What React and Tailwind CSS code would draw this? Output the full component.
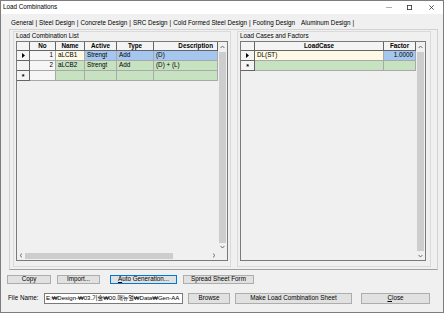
import React from "react";

// grid cell styles
const hd = "h-full flex items-center justify-center border-r border-b border-[#646464] bg-[#f4f4f4] font-bold";
const rh = "h-full flex items-center justify-center border-r border-b border-[#646464] bg-[#f4f4f4]";
const td = "h-full flex items-center border-r border-b border-[#a9a9a9] px-[2px] whitespace-nowrap overflow-hidden";

const blue = "bg-[#a5c7ef]";
const green = "bg-[#c6e2c1]";
const cream = "bg-[#fefae6]";
const plain = "bg-[#f6f6f6]";

function Arrow({ dir }) {
  const d = {
    up: "M0.6 3 L2.5 1 L4.4 3",
    down: "M0.6 1 L2.5 3 L4.4 1",
    left: "M3 0.6 L1 2.5 L3 4.4",
    right: "M1 0.6 L3 2.5 L1 4.4",
  }[dir];
  const vertical = dir === "up" || dir === "down";
  return (
    <svg width={vertical ? 5 : 4} height={vertical ? 4 : 5} viewBox={vertical ? "0 0 5 4" : "0 0 4 5"}>
      <path d={d} fill="none" stroke="#606060" strokeWidth="0.9" />
    </svg>
  );
}

function Pointer() {
  return (
    <svg width="3" height="5" viewBox="0 0 3 5">
      <polygon points="0,0 3,2.5 0,5" fill="#000" />
    </svg>
  );
}

function Star() {
  return <span className="font-bold text-[7px] leading-none translate-y-[1px]">*</span>;
}

function Btn({ className, children }) {
  return (
    <div className={`h-full flex items-center justify-center border bg-[#e1e1e1] whitespace-nowrap ${className}`}>
      {children}
    </div>
  );
}

const combos = [
  { no: "1", name: "aLCB1", active: "Strengt", type: "Add", desc: "(D)", current: true },
  { no: "2", name: "aLCB2", active: "Strengt", type: "Add", desc: "(D) + (L)" },
];

const tabs = ["General", "Steel Design", "Concrete Design", "SRC Design", "Cold Formed Steel Design", "Footing Design"];

export default function App() {
  return (
    <div className="w-[444px] h-[313px] bg-[#f0f0f0] border border-[#7d7d7d] flex flex-col overflow-hidden text-black text-[6.3px] leading-none font-['Liberation_Sans','Noto_Sans_CJK_KR',sans-serif]">
      {/* title bar */}
      <div className="h-[13px] shrink-0 bg-white flex items-center pl-[2px]">
        <span>Load Combinations</span>
        <div className="ml-auto h-full flex items-center mr-[2px]">
          <div className="w-[20px] h-full flex items-center justify-center">
            <svg width="6" height="1" viewBox="0 0 6 1">
              <rect width="6" height="0.8" fill="#9a9a9a" />
            </svg>
          </div>
          <div className="w-[20px] h-full flex items-center justify-center">
            <svg width="5" height="5" viewBox="0 0 5 5">
              <rect x="0.4" y="0.4" width="4.2" height="4.2" fill="none" stroke="#333" strokeWidth="0.8" />
            </svg>
          </div>
          <div className="w-[20px] h-full flex items-center justify-center ml-[2px]">
            <svg width="5" height="5" viewBox="0 0 5 5">
              <path d="M0.3 0.3 L4.7 4.7 M4.7 0.3 L0.3 4.7" stroke="#333" strokeWidth="0.8" />
            </svg>
          </div>
        </div>
      </div>

      {/* tab strip */}
      <div className="h-[15px] shrink-0 flex items-end pb-[3px] pl-[10px] whitespace-nowrap">
        {tabs.map((t, i) => (
          <React.Fragment key={t}>
            <span>{t}</span>
            {i < tabs.length - 1 && <span className="px-[2px]">|</span>}
          </React.Fragment>
        ))}
        <span className="ml-[6px]">Aluminum Design</span>
        <span className="px-[2px]">|</span>
      </div>

      {/* tab page */}
      <div className="ml-[8px] w-[429px] h-[241px] shrink-0 border border-[#d2d2d2] border-b-[#a0a0a0] flex pt-[1px] pl-[3px] gap-[6px]">
        {/* Load Combination List */}
        <div className="w-[218px] h-[236px] border border-[#dadada] flex flex-col pl-[2px]">
          <div className="h-[9px] flex items-center">Load Combination List</div>
          <div className="w-[212px] h-[220px] border border-[#7a7a7a] flex bg-[#f0f0f0]">
            <div className="w-[201px] flex flex-col">
              <div className="flex-1">
                <div className="flex h-[9px]">
                  <div className={`${rh} w-[13px]`} />
                  <div className={`${hd} w-[26px]`}>No</div>
                  <div className={`${hd} w-[29px]`}>Name</div>
                  <div className={`${hd} w-[32px]`}>Active</div>
                  <div className={`${hd} w-[37px]`}>Type</div>
                  <div className={`${hd} w-[64px] !justify-end pr-[4px]`}>Description</div>
                </div>
                {combos.map((r) => {
                  const bg = r.current ? blue : green;
                  return (
                    <div key={r.no} className="flex h-[10px]">
                      <div className={`${rh} w-[13px]`}>{r.current && <Pointer />}</div>
                      <div className={`${td} w-[26px] justify-end ${plain}`}>{r.no}</div>
                      <div className={`${td} w-[29px] ${r.current ? cream : green}`}>{r.name}</div>
                      <div className={`${td} w-[32px] ${bg}`}>{r.active}</div>
                      <div className={`${td} w-[37px] ${bg}`}>{r.type}</div>
                      <div className={`${td} w-[64px] ${bg}`}>{r.desc}</div>
                    </div>
                  );
                })}
                <div className="flex h-[10px]">
                  <div className={`${rh} w-[13px]`}>
                    <Star />
                  </div>
                  <div className={`${td} w-[26px] ${plain}`} />
                  <div className={`${td} w-[29px] ${green}`} />
                  <div className={`${td} w-[32px] ${green}`} />
                  <div className={`${td} w-[37px] ${green}`} />
                  <div className={`${td} w-[64px] ${green}`} />
                </div>
              </div>
              {/* horizontal scrollbar */}
              <div className="h-[9px] flex items-center">
                <div className="w-[8px] flex justify-center">
                  <Arrow dir="left" />
                </div>
                <div className="w-[148px] h-[6px] bg-[#cdcdcd]" />
                <div className="flex-1" />
                <div className="w-[9px] flex justify-center">
                  <Arrow dir="right" />
                </div>
              </div>
            </div>
            {/* vertical scrollbar */}
            <div className="w-[9px] flex flex-col">
              <div className="h-[10px] flex items-center justify-center">
                <Arrow dir="up" />
              </div>
              <div className="flex-1 mx-[1px] bg-[#cdcdcd]" />
              <div className="h-[8px] flex items-center justify-center">
                <Arrow dir="down" />
              </div>
              <div className="h-[9px]" />
            </div>
          </div>
        </div>

        {/* Load Cases and Factors */}
        <div className="w-[194px] h-[236px] border border-[#dadada] flex flex-col pl-[2px]">
          <div className="h-[9px] flex items-center">Load Cases and Factors</div>
          <div className="w-[186px] h-[220px] border border-[#7a7a7a] flex bg-[#f0f0f0]">
            <div className="w-[175px]">
              <div className="flex h-[9px]">
                <div className={`${rh} w-[14px]`} />
                <div className={`${hd} w-[129px]`}>LoadCase</div>
                <div className={`${hd} w-[32px]`}>Factor</div>
              </div>
              <div className="flex h-[10px]">
                <div className={`${rh} w-[14px]`}>
                  <Pointer />
                </div>
                <div className={`${td} w-[129px] ${cream}`}>DL(ST)</div>
                <div className={`${td} w-[32px] justify-end ${blue}`}>1.0000</div>
              </div>
              <div className="flex h-[10px]">
                <div className={`${rh} w-[14px]`}>
                  <Star />
                </div>
                <div className={`${td} w-[129px] ${green}`} />
                <div className={`${td} w-[32px] ${green}`} />
              </div>
            </div>
            <div className="w-[9px] flex flex-col">
              <div className="h-[10px] flex items-center justify-center">
                <Arrow dir="up" />
              </div>
              <div className="flex-1 mx-[1px] bg-[#cdcdcd]" />
              <div className="h-[9px] flex items-center justify-center">
                <Arrow dir="down" />
              </div>
            </div>
          </div>
        </div>
      </div>

      {/* action buttons */}
      <div className="h-[9px] mt-[5px] shrink-0 flex">
        <Btn className="ml-[6px] w-[44px] border-[#adadad]">Copy</Btn>
        <Btn className="ml-[6px] w-[43px] border-[#adadad]">Import...</Btn>
        <Btn className="ml-[10px] w-[67px] border-[#0078d7]">
          <span>
            <span className="underline">A</span>uto Generation...
          </span>
        </Btn>
        <Btn className="ml-[6px] w-[71px] border-[#adadad]">Spread Sheet Form</Btn>
      </div>

      {/* file row */}
      <div className="h-[11px] mt-[9px] shrink-0 flex items-center">
        <span className="ml-[7px] w-[36px]">File Name:</span>
        <div className="w-[139px] h-full border border-[#7a7a7a] bg-white flex items-center pl-[1px] whitespace-nowrap overflow-hidden text-[6.1px] tracking-[-0.05px]">
          E:₩Design-₩03.기술₩00.매뉴얼₩Data₩Gen-AA
        </div>
        <Btn className="ml-[5px] w-[42px] border-[#adadad]">Browse</Btn>
        <Btn className="ml-[5px] w-[117px] border-[#adadad]">Make Load Combination Sheet</Btn>
        <Btn className="ml-[9px] w-[69px] border-[#adadad]">
          <span>
            <span className="underline">C</span>lose
          </span>
        </Btn>
      </div>
    </div>
  );
}
